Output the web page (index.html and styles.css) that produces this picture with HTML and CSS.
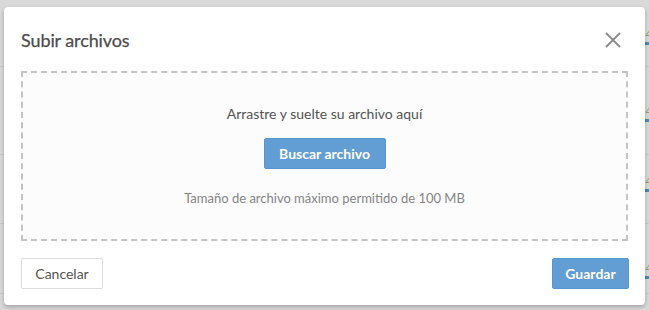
FILE: index.html
```html
<!DOCTYPE html>
<html lang="es">
<head>
<meta charset="utf-8">
<title>Subir archivos</title>
<link rel="stylesheet" href="styles.css">
</head>
<body>
<div class="page">
  <div class="row r1"><span class="peek">4</span><span class="bar"></span></div>
  <div class="row r2"><span class="peek">4</span><span class="bar"></span></div>
  <div class="row r3"><span class="peek">4</span><span class="bar"></span></div>
  <div class="row r4"><span class="peek">4</span><span class="bar"></span></div>
</div>
<div class="overlay">
  <div class="modal">
    <div class="modal-header">
      <h2 class="modal-title">Subir archivos</h2>
      <button class="close" aria-label="Cerrar">
        <svg width="16" height="16" viewBox="0 0 16 16"><path d="M1 1 L15 15 M15 1 L1 15" stroke="#8a8a8a" stroke-width="1.8" fill="none"/></svg>
      </button>
    </div>
    <div class="dropzone">
      <p class="drop-text">Arrastre y suelte su archivo aquí</p>
      <button class="btn btn-primary">Buscar archivo</button>
      <p class="drop-hint">Tamaño de archivo máximo permitido de 100 MB</p>
    </div>
    <div class="modal-footer">
      <button class="btn btn-default">Cancelar</button>
      <button class="btn btn-primary">Guardar</button>
    </div>
  </div>
</div>
</body>
</html>
```
FILE: styles.css
```css
* { box-sizing: border-box; }
html, body { margin: 0; padding: 0; }
body {
  width: 649px;
  height: 310px;
  overflow: hidden;
  background: #d9d9d9;
  font-family: Lato, "Open Sans", sans-serif;
  position: relative;
}
.page { display: flex; flex-direction: column; }
.row {
  border-bottom: 1px solid #c9c9c9;
  display: flex;
  flex-direction: column;
  align-items: flex-end;
}
.r1 { height: 67px; padding-top: 28px; }
.r2 { height: 88px; padding-top: 38px; }
.r3 { height: 69px; padding-top: 20px; }
.r4 { height: 70px; padding-top: 38px; }
.peek {
  font-size: 11px;
  line-height: 11px;
  color: #9a9a7a;
  margin-right: -3px;
}
.bar {
  width: 5px;
  height: 3px;
  background: #4f87bd;
  margin-top: 3px;
}
.overlay {
  position: absolute;
  inset: 0;
  padding: 7px 4px 0 4px;
}
.modal {
  width: 641px;
  height: 298px;
  background: #fff;
  border-radius: 4px;
  box-shadow: 0 2px 4px rgba(0,0,0,0.25);
  padding: 0 17px;
  display: flex;
  flex-direction: column;
}
.modal-header {
  height: 64px;
  display: flex;
  align-items: center;
  justify-content: space-between;
  padding-top: 2px;
}
.modal-title {
  margin: 0;
  font-size: 18px;
  font-weight: 400;
  color: #4d4d4d;
  letter-spacing: -0.1px;
  -webkit-text-stroke: 0.25px #4d4d4d;
}
.close {
  background: none;
  border: 0;
  padding: 0;
  margin-right: 7px;
  width: 16px;
  height: 16px;
  display: flex;
}
.dropzone {
  height: 170px;
  border: 2px dashed #c4c4c4;
  background: #fcfcfc;
  display: flex;
  flex-direction: column;
  align-items: center;
  padding-top: 31px;
}
.drop-text, .drop-hint {
  margin: 0;
  line-height: 20px;
}
.drop-text { color: #555; font-size: 14px; }
.drop-hint { color: #858585; font-size: 13px; margin-top: 19px; }
.btn {
  height: 31px;
  font-family: Lato, "Open Sans", sans-serif;
  font-size: 14px;
  border-radius: 2px;
  padding: 0;
  white-space: nowrap;
  cursor: pointer;
}
.dropzone .btn { margin-top: 14px; }
.btn-primary {
  background: #629dd3;
  border: 1px solid #5a96cd;
  color: #fff;
  font-weight: 700;
}
.btn-default {
  background: #fff;
  border: 1px solid #dcdcdc;
  color: #555;
  font-weight: 400;
}
.modal-footer {
  display: flex;
  justify-content: space-between;
  margin-top: 17px;
}
.modal-footer .btn-default { width: 82px; }
.modal-footer .btn-primary { width: 77px; margin-right: -1px; }
.dropzone .btn-primary { width: 122px; }
```
